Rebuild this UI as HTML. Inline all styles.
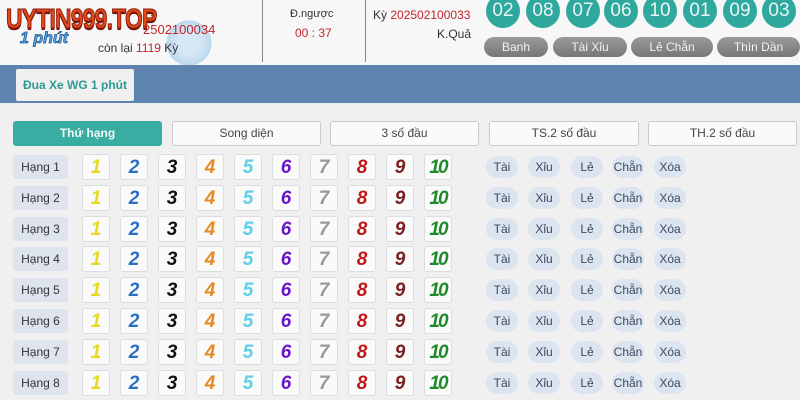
<!DOCTYPE html>
<html><head><meta charset="utf-8"><style>
*{margin:0;padding:0;box-sizing:border-box}
body{width:800px;height:400px;overflow:hidden;background:#f0f0f0;font-family:"Liberation Sans",sans-serif;position:relative;font-size:12px;color:#333}
.a{position:absolute}
.hdr{left:0;top:0;width:800px;height:65px;background:#f7f7f8}
.red{color:#c0262b}
.ball{width:34px;height:34px;border-radius:50%;background:#2fa89e;color:#e8f6f4;font-size:19px;text-align:center;line-height:34px;top:-6px}
.gb{top:37px;height:20px;border-radius:10px;background:linear-gradient(#9a9a9a,#777);color:#f2f2f2;font-size:12px;text-align:center;line-height:20px}
.tab{top:121px;height:25px;border:1px solid #c9c9c9;background:#fafafa;border-radius:3px;text-align:center;line-height:23px;font-size:12px;color:#444}
.lab{left:13px;width:55px;height:24px;background:#dde4ee;border-radius:3px;text-align:center;line-height:24px;font-size:12px;color:#333}
.n{width:28px;height:26px;border:1px solid #ddd;background:#fafafa;border-radius:3px;text-align:center;line-height:26px;font-size:19px;font-weight:bold;font-style:italic}
.p{width:32px;height:22px;border-radius:11px;background:#dbe4ef;text-align:center;line-height:22px;font-size:12px;color:#3a4a63}
</style></head><body>
<div class="a hdr"></div>
<div class="a" style="left:160px;top:20px;width:58px;height:46px;border-radius:50%;background:radial-gradient(circle,#d6e8f6 30%,#bcd8ee 60%,transparent 62%)"></div>
<div class="a" style="left:6px;top:3px;font-size:28px;font-weight:bold;color:#e0481c;letter-spacing:-1px;transform:scaleX(.82);transform-origin:left;-webkit-text-stroke:1px #8a1a08;text-shadow:0 2px 0 #6b1608">UYTIN999.TOP</div>
<div class="a" style="left:20px;top:30px;font-size:16px;font-weight:bold;font-style:italic;color:#5aa8e8;-webkit-text-stroke:.7px #1a4f8a">1 phút</div>
<div class="a" style="left:150px;top:10px;font-size:13px">:</div>
<div class="a red" style="left:143px;top:22px;font-size:13px">2502100034</div>
<div class="a" style="left:98px;top:41px;font-size:12px">còn lại <span class="red">1119</span> Kỳ</div>
<div class="a" style="left:262px;top:0;width:1px;height:62px;background:#888"></div>
<div class="a" style="left:365px;top:0;width:1px;height:62px;background:#888"></div>
<div class="a" style="left:290px;top:8px;font-size:11px">Đ.ngược</div>
<div class="a red" style="left:295px;top:26px;font-size:12px">00 : 37</div>
<div class="a" style="left:373px;top:8px;font-size:12px">Kỳ <span class="red">202502100033</span></div>
<div class="a" style="left:437px;top:27px;font-size:12px">K.Quả</div>
<div class="a ball" style="left:486px">02</div>
<div class="a ball" style="left:526px">08</div>
<div class="a ball" style="left:566px">07</div>
<div class="a ball" style="left:604px">06</div>
<div class="a ball" style="left:643px">10</div>
<div class="a ball" style="left:683px">01</div>
<div class="a ball" style="left:723px">09</div>
<div class="a ball" style="left:762px">03</div>
<div class="a gb" style="left:484px;width:64px">Banh</div>
<div class="a gb" style="left:553px;width:74px">Tài Xỉu</div>
<div class="a gb" style="left:631px;width:82px">Lẻ Chẵn</div>
<div class="a gb" style="left:717px;width:83px">Thìn Dần</div>
<div class="a" style="left:0;top:65px;width:800px;height:38px;background:#5d83ae"></div>
<div class="a" style="left:16px;top:69px;width:118px;height:32px;background:#f0f0f0;border-radius:2px;color:#2f9a93;font-weight:bold;font-size:12px;text-align:center;line-height:32px">Đua Xe WG 1 phút</div>
<div class="a tab" style="left:13px;width:149px;background:#3aada3;border-color:#3aada3;color:#eefaf8;font-weight:bold">Thứ hạng</div>
<div class="a tab" style="left:172px;width:149px">Song diện</div>
<div class="a tab" style="left:330px;width:149px">3 số đầu</div>
<div class="a tab" style="left:489px;width:150px">TS.2 số đầu</div>
<div class="a tab" style="left:648px;width:149px">TH.2 số đầu</div>
<div id="rows"></div>
<script>
var c=['#e8d820','#2a6fc4','#111','#e58a22','#5fd0e8','#6a16c8','#999','#c0181c','#7a2020','#1f8a2a'];
var xs=[82,120,158,196,234,272,310,348,386,424];
var px=[486,528,571,612,654],pl=['Tài','Xỉu','Lẻ','Chẵn','Xóa'];
var h='';
for(var r=0;r<8;r++){var y=155+r*30.8;
h+='<div class="a lab" style="top:'+y+'px">Hạng '+(r+1)+'</div>';
for(var i=0;i<10;i++)h+='<div class="a n" style="left:'+xs[i]+'px;top:'+(y-1)+'px;color:'+c[i]+(i==9?';letter-spacing:-2px':'')+'">'+(i+1)+'</div>';
for(var j=0;j<5;j++)h+='<div class="a p" style="left:'+px[j]+'px;top:'+(y+1)+'px">'+pl[j]+'</div>';}
document.getElementById('rows').innerHTML=h;
</script>
</body></html>
